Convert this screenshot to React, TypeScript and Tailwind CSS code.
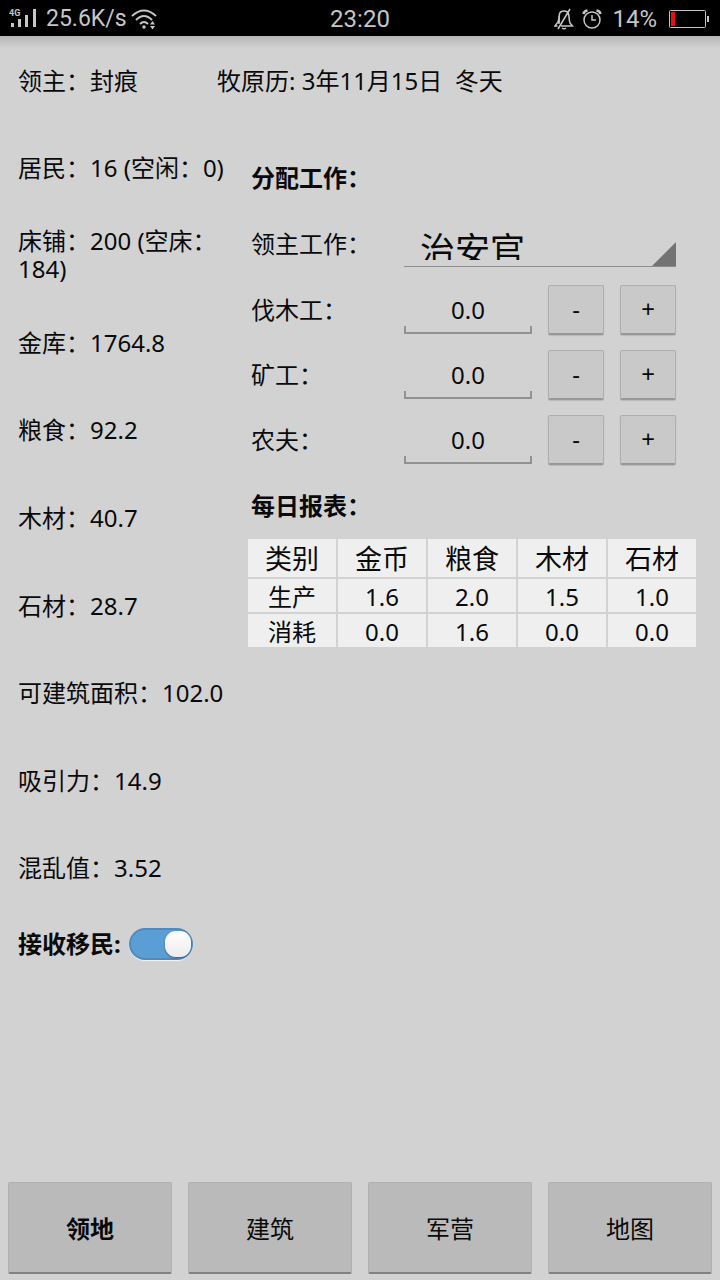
import { useState } from "react";

const stats = [
  "居民：16 (空闲：0)",
  "床铺：200 (空床：184)",
  "金库：1764.8",
  "粮食：92.2",
  "木材：40.7",
  "石材：28.7",
  "可建筑面积：102.0",
  "吸引力：14.9",
  "混乱值：3.52",
];

const jobs = [
  { id: "lumberjack", title: "伐木工：" },
  { id: "miner", title: "矿工：" },
  { id: "farmer", title: "农夫：" },
];

const report = {
  head: ["类别", "金币", "粮食", "木材", "石材"],
  rows: [
    ["生产", "1.6", "2.0", "1.5", "1.0"],
    ["消耗", "0.0", "1.6", "0.0", "0.0"],
  ],
};

const tabs = ["领地", "建筑", "军营", "地图"];

export default function App() {
  const [active, setActive] = useState<number>(0);

  return (
    <div className="flex min-h-screen flex-col bg-[#d2d2d2] font-['Noto_Sans','Noto_Sans_CJK_SC',sans-serif] text-2xl leading-7 text-[#0a0a0a]">
      <StatusBar />
      <div className="h-3 bg-linear-to-b from-[#b4b4b4] to-[#d2d2d2]" />

      <header className="flex h-[76px] pt-[19px] pl-[18px]">
        <p className="w-[199px]">领主：封痕</p>
        <p className="whitespace-pre">{"牧原历: 3年11月15日  冬天"}</p>
      </header>

      <main className="flex flex-1">
        <Stats />
        <div className="flex-1 pt-[21px] pr-6">
          <Jobs />
          <Report />
        </div>
      </main>

      <nav className="flex gap-4 px-2 pt-2 pb-1.5">
        {tabs.map((title: string, index: number) => (
          <button
            key={title}
            type="button"
            onClick={() => setActive(index)}
            className={`h-[92px] flex-1 rounded-xs border border-b-2 border-[#b0b0b0] border-b-[#828282] bg-[#bababa] pt-0.5 ${
              active === index ? "font-bold" : ""
            }`}
          >
            {title}
          </button>
        ))}
      </nav>
    </div>
  );
}

function StatusBar() {
  return (
    <div className="grid h-9 grid-cols-[1fr_auto_1fr] items-center bg-black pt-0.5 font-[Roboto,sans-serif] text-[#c6c6c6]">
      <div className="flex items-center gap-2 pl-2 text-[23px]">
        <SignalIcon />
        <span>25.6K/s</span>
        <WifiIcon />
      </div>
      <span>23:20</span>
      <div className="flex items-center justify-end gap-2 pr-[11px]">
        <BellOffIcon />
        <AlarmIcon />
        <span className="pr-1 pl-0.5">14%</span>
        <BatteryIcon />
      </div>
    </div>
  );
}

function Stats() {
  return (
    <section className="flex w-[248px] flex-col pb-[198px] pl-[18px]">
      {stats.map((text: string) => (
        <p key={text} className="flex flex-1 items-center">
          {text}
        </p>
      ))}
      <div className="flex h-16 items-center gap-2 font-bold">
        <label htmlFor="immigrants">接收移民:</label>
        <input
          id="immigrants"
          type="checkbox"
          role="switch"
          defaultChecked
          className="flex h-8 w-16 appearance-none items-center rounded-full border-2 border-[#5089bd] bg-[#aaaaaa] shadow-[0_1px_1px_#f4f4f4] before:h-[26px] before:w-[26px] before:rounded-[11px] before:bg-linear-to-b before:from-white before:to-[#ececec] before:shadow-[0_1px_2px_#35618a] checked:justify-end checked:bg-[#5b9ed6]"
        />
      </div>
    </section>
  );
}

function Jobs() {
  return (
    <section>
      <h2 className="flex h-[66px] items-center pl-[3px] font-bold">
        分配工作：
      </h2>
      <div className="grid h-[66px] grid-cols-[1fr_272px] items-center pr-5 pl-[3px]">
        <label htmlFor="lord-job">领主工作：</label>
        <div className="relative self-end border-b border-[#8c8c8c] pb-1.5 mb-2.5">
          {/* the row is too low for its large text, so the text is cut off */}
          <div className="h-[30px] overflow-hidden">
            <select
              id="lord-job"
              className="block h-[40px] w-full appearance-none bg-transparent pl-4 text-[35px] leading-10"
            >
              <option>治安官</option>
            </select>
          </div>
          <svg
            viewBox="0 0 24 24"
            className="pointer-events-none absolute right-0 bottom-0 size-6"
          >
            <path d="M24 0V24H0Z" fill="#737373" />
          </svg>
        </div>
      </div>
      {jobs.map((job) => (
        <JobRow key={job.id} id={job.id} title={job.title} />
      ))}
    </section>
  );
}

function JobRow({ id, title }: { id: string; title: string }) {
  const [count, setCount] = useState<number>(0);

  const buttonStyle =
    "h-[50px] rounded-xs border border-b-2 border-[#aeaeae] border-b-[#989898] bg-[#c9c9c9] shadow-[0_1px_1px_#b8b8b8]";

  return (
    <div className="grid h-[65px] grid-cols-[1fr_128px_56px_56px] items-center gap-4 pr-5 pl-[3px]">
      <label htmlFor={id}>{title}</label>
      <div>
        <input
          id={id}
          readOnly
          value={count.toFixed(1)}
          className="block h-[49px] w-full bg-transparent text-center outline-none"
        />
        <div className="-mt-2 h-2 border-x-2 border-b-2 border-[#929292]" />
      </div>
      <button
        type="button"
        className={buttonStyle}
        onClick={() => setCount(Math.max(0, count - 1))}
      >
        -
      </button>
      <button
        type="button"
        className={buttonStyle}
        onClick={() => setCount(count + 1)}
      >
        +
      </button>
    </div>
  );
}

function Report() {
  return (
    <section className="pt-px">
      <h2 className="flex h-[66px] items-center pl-[3px] font-bold">
        每日报表：
      </h2>
      <div className="-m-0.5">
        <table className="w-full table-fixed border-separate border-spacing-0.5 text-center">
          <thead>
            <tr>
              {report.head.map((text: string) => (
                <th
                  key={text}
                  className="h-[38px] bg-[#efefef] p-0 pt-0.5 text-[27px] font-normal"
                >
                  {text}
                </th>
              ))}
            </tr>
          </thead>
          <tbody>
            {report.rows.map((row: string[]) => (
              <tr key={row[0]}>
                {row.map((text: string, index: number) => (
                  <td key={index} className="h-[33px] bg-[#efefef] p-0 pt-0.5">
                    {text}
                  </td>
                ))}
              </tr>
            ))}
          </tbody>
        </table>
      </div>
    </section>
  );
}

function SignalIcon() {
  return (
    <svg width="30" height="24" viewBox="0 0 30 24" fill="currentColor">
      <text x="1" y="9" fontSize="9" fontWeight="bold">
        4G
      </text>
      <path d="M3 16h3v4H3zM10 12h3v8h-3zM17 8h3v12h-3zM25 2h3v18h-3z" />
    </svg>
  );
}

function WifiIcon() {
  return (
    <svg
      width="26"
      height="22"
      viewBox="0 0 26 22"
      fill="none"
      stroke="currentColor"
      strokeWidth="2"
      className="-ml-1"
    >
      <path d="M1 8Q13-3 25 8M5 12Q13 4 21 12M9 16Q13 12 17 16" />
      <circle cx="13" cy="19" r="1.7" fill="currentColor" stroke="none" />
      <path
        d="M19 16.5 21.500 13 24 16.500ZM19 18h5l-2.500 3.500Z"
        fill="currentColor"
        stroke="none"
      />
    </svg>
  );
}

function BellOffIcon() {
  return (
    <svg
      width="20"
      height="22"
      viewBox="0 0 20 22"
      fill="none"
      stroke="currentColor"
      strokeWidth="1.500"
    >
      <path d="M5 16C6 10 3 3 10 3S14 10 16 15L18.500 18H7M3.500 18H1L4 14Q5 11 5 8M8 20q2 1.500 4 0M16 1 4 21" />
    </svg>
  );
}

function AlarmIcon() {
  return (
    <svg
      width="20"
      height="20"
      viewBox="0 0 20 20"
      fill="none"
      stroke="currentColor"
      strokeWidth="1.500"
    >
      <circle cx="10" cy="11" r="8" />
      <path d="M10 6v5h4" />
      <path d="M1.500 5Q2 2 5.500 1.500M18.500 5Q18 2 14.500 1.500" strokeWidth="2.500" />
    </svg>
  );
}

function BatteryIcon() {
  return (
    <svg width="40" height="18" viewBox="0 0 40 18" fill="none">
      <rect x=".5" y=".5" width="36" height="17" rx="1" stroke="currentColor" />
      <path d="M2 2h4v14H2z" fill="#e81010" />
      <path d="M38 6h2v6h-2z" fill="currentColor" />
    </svg>
  );
}
